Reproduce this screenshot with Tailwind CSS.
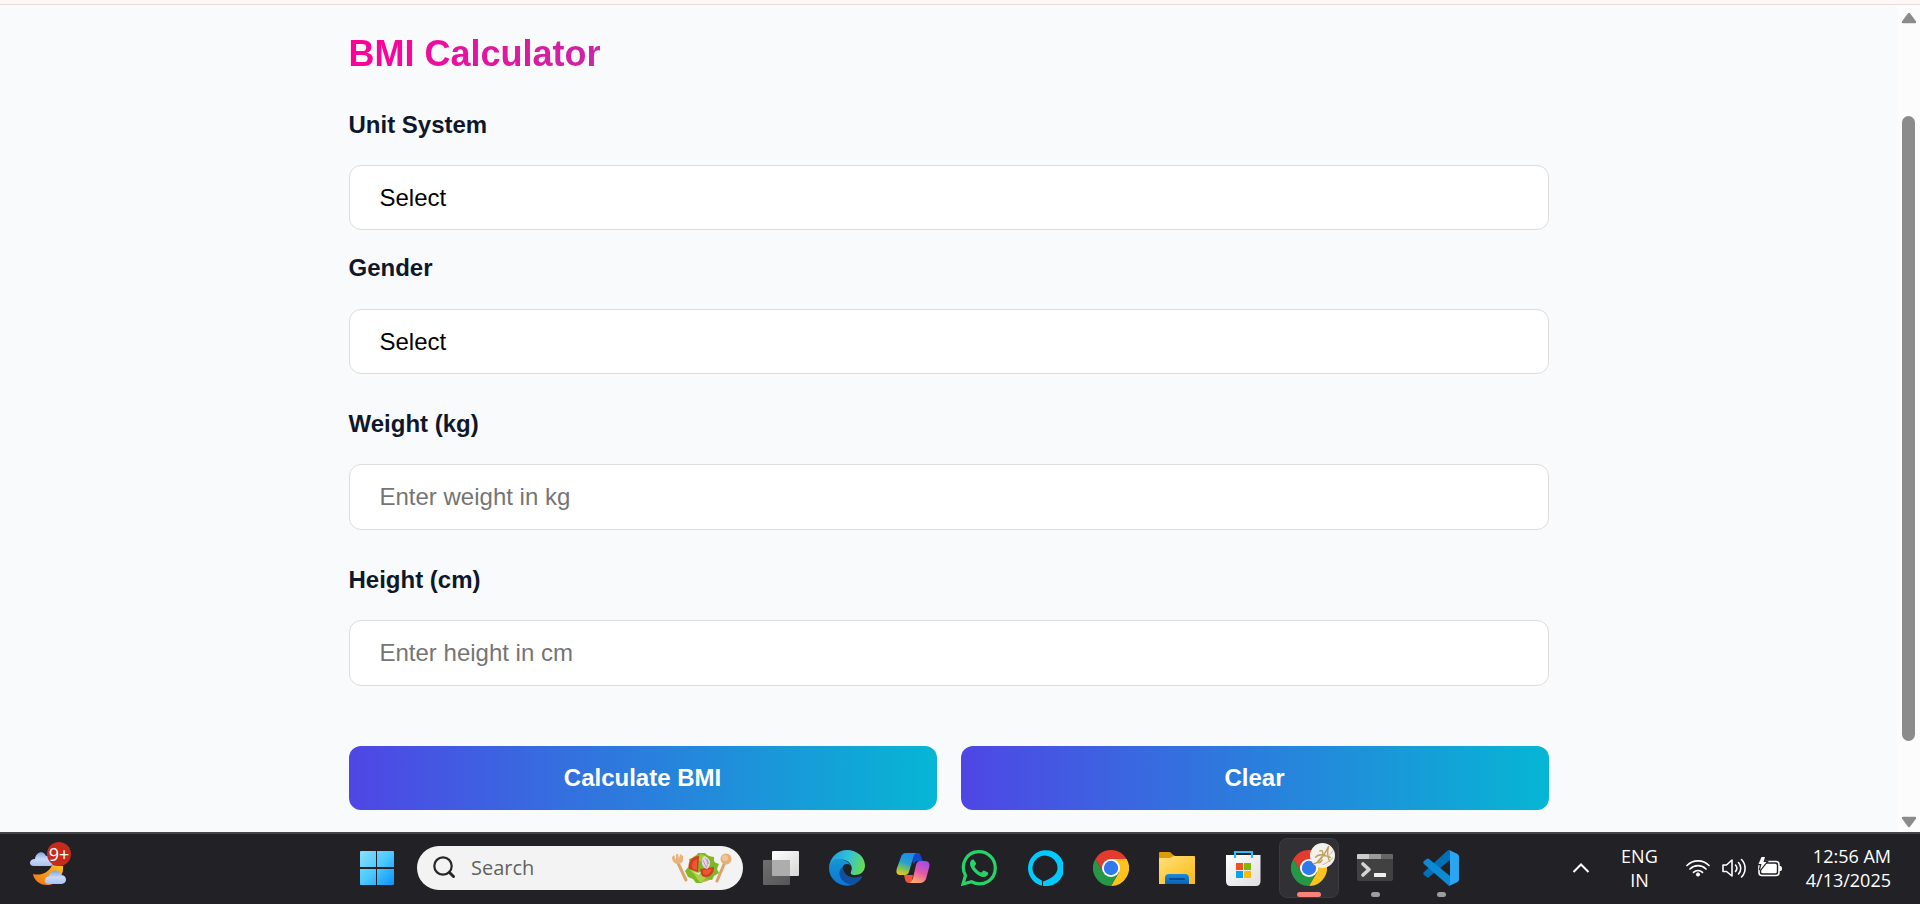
<!DOCTYPE html>
<html lang="en">
<head>
<meta charset="utf-8">
<title>BMI Calculator</title>
<script src="https://cdn.jsdelivr.net/npm/@tailwindcss/browser@4"></script>
</head>
<body class="flex h-screen flex-col overflow-hidden bg-[#f9fafc] font-['Liberation_Sans',Arial,sans-serif]">
<div class="h-[5px] shrink-0 border-b border-[#e6dcdb] bg-[#fff8f6]"></div>

<div class="flex min-h-0 flex-1">
  <main class="flex-1 overflow-hidden px-6 pt-[29px]">
    <form class="mx-auto flex max-w-[1200px] flex-col text-2xl text-black">
      <h1 class="mb-[37px] bg-linear-to-r/srgb from-[#ff0099] to-[#06b6d4] bg-clip-text text-4xl font-bold text-transparent">BMI Calculator</h1>
      <label for="unit" class="mb-[26px] text-2xl/7 font-bold text-[#0f172a]">Unit System</label>
      <select id="unit" class="mb-6 h-[65px] w-full appearance-none rounded-xl border border-[#dddddd] bg-white px-[30px]"><option>Select</option><option>Metric</option><option>Imperial</option></select>
      <label for="gender" class="mb-[27px] text-2xl/7 font-bold text-[#0f172a]">Gender</label>
      <select id="gender" class="mb-9 h-[65px] w-full appearance-none rounded-xl border border-[#dddddd] bg-white px-[30px]"><option>Select</option><option>Male</option><option>Female</option></select>
      <label for="weight" class="mb-[26px] text-2xl/7 font-bold text-[#0f172a]">Weight (kg)</label>
      <input id="weight" type="text" inputmode="decimal" placeholder="Enter weight in kg" class="mb-9 h-[66px] w-full rounded-xl border border-[#dddddd] bg-white px-[30px] placeholder:text-[#757575]">
      <label for="height" class="mb-[26px] text-2xl/7 font-bold text-[#0f172a]">Height (cm)</label>
      <input id="height" type="text" inputmode="decimal" placeholder="Enter height in cm" class="mb-[60px] h-[66px] w-full rounded-xl border border-[#dddddd] bg-white px-[30px] placeholder:text-[#757575]">
      <div class="grid grid-cols-2 gap-6">
        <button type="button" class="h-16 rounded-xl bg-linear-to-r/srgb from-[#4f46e5] to-[#06b6d4] font-bold text-white">Calculate BMI</button>
        <button type="button" class="h-16 rounded-xl bg-linear-to-r/srgb from-[#4f46e5] to-[#06b6d4] font-bold text-white">Clear</button>
      </div>
    </form>
  </main>
  <div class="flex w-[23px] flex-col items-center bg-[#fcfcfc] pt-[7px] pb-1 text-[#8b8b8b]" aria-hidden="true">
    <svg class="h-3 w-4" viewBox="0 0 16 12"><path d="M8 2 14 10H2Z" fill="currentColor" stroke="currentColor" stroke-width="2.4" stroke-linejoin="round"/></svg>
    <div class="mt-[92px] mb-[75px] w-[13px] flex-1 rounded-full bg-[#8b8b8b]"></div>
    <svg class="h-3 w-4" viewBox="0 0 16 12"><path d="M2 2H14L8 10Z" fill="currentColor" stroke="currentColor" stroke-width="2.4" stroke-linejoin="round"/></svg>
  </div>
</div>

<footer class="flex h-[72px] shrink-0 items-center border-t-2 border-[#454548] bg-[#222126] pr-[29px] pb-[2px] font-['Open_Sans','Noto_Sans',sans-serif] text-white">
  <div class="w-[344px] shrink-0 pl-7">
    <button type="button" aria-label="Weather, 9+ alerts" class="relative block h-[52px] w-[43px]">
      <svg class="h-12 w-[43px]" viewBox="0 0 43 48">
        <defs>
          <linearGradient id="cloud" x1="0" y1="0" x2="0" y2="1"><stop stop-color="#7fa3e4"/><stop offset=".5" stop-color="#c9dafa"/><stop offset="1" stop-color="#a9c1f2"/></linearGradient>
          <linearGradient id="moon" x1="1" y1="0" x2="0" y2="1"><stop stop-color="#fbc02d"/><stop offset="1" stop-color="#ee7212"/></linearGradient>
        </defs>
        <path d="M5 30C12 32 21 29 24 21L35 22C36 33 28 41 19 41 11 41 6 36 5 30Z" fill="url(#moon)"/>
        <path d="M6 22C0 22 1 15 7 15 8 7 16 6 18 12 23 10 25 14 25 17 26 20 24 22 21 22Z" fill="url(#cloud)"/>
        <path d="M21 40C15 40 16 33 21 32 23 25 31 25 33 31 39 31 40 39 34 40Z" fill="url(#cloud)"/>
      </svg>
      <span class="absolute top-0 right-0 flex size-6 items-center justify-center rounded-full bg-[#c42b1c] text-lg">9+</span>
    </button>
  </div>

  <nav class="flex items-center" aria-label="Taskbar">
    <button type="button" aria-label="Start" class="flex w-[66px] justify-center">
      <svg class="size-9" viewBox="0 0 36 36">
        <defs><linearGradient id="win" x1="0" y1="0" x2="1" y2="1"><stop stop-color="#88e2fd"/><stop offset=".5" stop-color="#4cc9fd"/><stop offset="1" stop-color="#0a93fc"/></linearGradient></defs>
        <path d="M2 1H17V17H1V2Q1 1 2 1ZM18 1H34Q35 1 35 2V17H18ZM1 19H17V35H2Q1 35 1 34ZM18 19H35V34Q35 35 34 35H18Z" fill="url(#win)"/>
      </svg>
    </button>
    <label class="mr-[5px] ml-[7px] flex h-11 w-[326px] items-center rounded-full bg-[#f3f3f3] pr-[10px] pl-4">
      <svg class="size-6 shrink-0" viewBox="0 0 24 24" fill="none" stroke="#272727" stroke-linecap="round"><circle cx="10" cy="10" r="8.7" stroke-width="2.2"/><path d="M16.5 16.500 20.500 20.500" stroke-width="3"/></svg>
      <input type="search" aria-label="Search" placeholder="Search" class="ml-[14px] w-0 min-w-0 flex-1 bg-transparent text-xl text-black placeholder:text-[#626262]">
      <svg class="h-8 w-[62px] shrink-0" viewBox="0 0 62 32">
        <path d="M7 11 15 28" stroke="#dba368" stroke-width="3" stroke-linecap="round"/>
        <path d="M1 5 3 3 5 8 5 2H7L8 7 9 2 12 4C13 9 11 12 7 12 3 12 1 9 1 5Z" fill="#e8b47c"/>
        <path d="M54 10 46 29" stroke="#dba368" stroke-width="3" stroke-linecap="round"/><circle cx="55" cy="7" r="5.500" fill="#e5af77"/><circle cx="54" cy="6" r="3" fill="#f0c797"/>
        <circle cx="31" cy="16" r="14" fill="#d9a060"/>
        <path d="M14 19 19 13 18 7 24 5 27 1 34 1 37 4 43 5 43 10 48 12 46 17 48 21 43 24 41 28 35 27 31 31 25 31 22 27 17 25Z" fill="#7eb827"/>
        <path d="M18 17 23 22 27 28 30 31 35 26 28 21Z" fill="#a9d44a"/><path d="M29 2 35 4 34 10 28 9Z" fill="#a0cf3c"/>
        <path d="M28 4C20 4 17 11 18 17L27 20Z" fill="#d83a20"/><path d="M26 7C21 9 20 14 22 17L26 18Z" fill="#e8593a"/>
        <path d="M29 17 43 15C43 23 37 27 31 24Z" fill="#d83a20"/><path d="M32 18 41 17C39 22 36 24 32 22Z" fill="#e8593a"/>
        <path d="M33 4C40 6 41 13 36 17 31 16 29 9 33 4Z" fill="#e8d5e8"/><path d="M34 6C37 9 37 13 35 16M32 8 35 15M36 7 38 12" stroke="#b58bb5" fill="none" stroke-width=".8"/>
        <path d="M21 19 26 21 30 20 28 23Z" fill="#f1e6df"/>
      </svg>
    </label>

    <button type="button" aria-label="Task view" class="flex w-[66px] justify-center">
      <svg class="size-9" viewBox="0 0 36 36">
        <defs><linearGradient id="tv" x2="1" y2="1"><stop stop-color="#fff"/><stop offset="1" stop-color="#d6d6d6"/></linearGradient><linearGradient id="tv2" x2="1" y2="1"><stop stop-color="#707070"/><stop offset="1" stop-color="#555"/></linearGradient></defs>
        <rect x="9" y="1" width="27" height="25" rx="1" fill="url(#tv)"/><rect y="10" width="27" height="25" rx="1" fill="url(#tv2)"/><path d="M9 10H27V26H10Q9 26 9 25Z" fill="#adadad"/>
      </svg>
    </button>
    <button type="button" aria-label="Microsoft Edge" class="flex w-[66px] justify-center">
      <svg class="size-9" viewBox="0 0 36 36">
        <defs>
          <linearGradient id="ed1" x1="0" y1=".4" x2="1" y2=".6"><stop stop-color="#1d9fe2"/><stop offset=".5" stop-color="#34c1d6"/><stop offset="1" stop-color="#67df4c"/></linearGradient>
          <linearGradient id="ed2" x1="0" y1="0" x2="0" y2="1"><stop stop-color="#1695d3"/><stop offset="1" stop-color="#0b78d8"/></linearGradient>
        </defs>
        <path d="M0 17C1 7 9 0 18 0 28 0 36 7 36 15.500 36 22 31 25 26 25 22 25 21 23.500 22 21.500 24 17 21 10 13 9.500 6 9 2 13 0 17Z" fill="url(#ed1)"/>
        <path d="M0 18C1 10 9 7 15 10 20 12 22 15 22 18 18 11 10 18 12 25 14 32 22 36 27 33.500 14 40 0 31 0 18Z" fill="url(#ed2)"/>
        <path d="M15 16C6 21 11 34 24 35 28 33 31 31 33 27 33 26 32 26 31 26.500 21 30 13 24 15 16Z" fill="#10519d"/>
        <path d="M18 14C23 14 23 18 22 21 21 23 21 24 23 25 17 24 13 20 14 16Q15 14 18 14Z" fill="#202126"/>
      </svg>
    </button>
    <button type="button" aria-label="Copilot" class="flex w-[66px] justify-center">
      <svg class="size-9" viewBox="0 0 36 36">
        <defs>
          <linearGradient id="cp1" x1=".5" y1="0" x2=".2" y2="1"><stop stop-color="#1a8fe6"/><stop offset=".4" stop-color="#249fd3"/><stop offset=".7" stop-color="#7bbf60"/><stop offset="1" stop-color="#f3c516"/></linearGradient>
          <linearGradient id="cp2" x1=".7" y1="0" x2=".3" y2="1"><stop stop-color="#a34be8"/><stop offset=".5" stop-color="#e35aa7"/><stop offset="1" stop-color="#ffae65"/></linearGradient>
        </defs>
        <path d="M18 3H23C26 3 26 8 28 11H22Q20 11 19 14L17 11Z" fill="#1747c4"/>
        <path d="M9 25H18L17 31Q16 33 14 33C10 33 10 29 9 25Z" fill="#f1513f"/>
        <path d="M11 3H21Q19 4 18 8L14 22Q13 25 10 25H5C1 25 1 21 2 18L6 7Q7 3 11 3Z" fill="url(#cp1)"/>
        <path d="M25 11H30C35 11 35 15 34 18L31 29Q29 33 25 33H14Q17 32 18 28L21 15Q22 11 25 11Z" fill="url(#cp2)"/>
      </svg>
    </button>
    <button type="button" aria-label="WhatsApp" class="flex w-[66px] justify-center">
      <svg class="size-9" viewBox="0 0 36 36"><path d="M2 34 4.500 25.500C-1.500 14 6 1.700 18 1.700 27 1.700 34.300 9 34.300 18 34.300 30 22 37.500 10.500 31.700Z" fill="none" stroke="#25d366" stroke-width="3.200"/><path d="M12.500 9.500C11 9 9 11 9 13.500 9 19 17 27 23 27 26 27 28 24 27 22.500L23 20.500C22 20 21 22.500 20 22.500 18 22 14.500 19 13.500 16.500 13.500 15.500 15.500 14.500 15 13Z" fill="#25d366"/></svg>
    </button>
    <button type="button" aria-label="Alexa" class="flex w-[66px] justify-center">
      <svg class="size-9" viewBox="0 0 36 36"><path d="M15 35.700V31.500C15 30.300 14.300 30 13.500 29.700A12.500 12.500 0 1 1 30.500 18C30.500 24.500 24 29 16 31.500V35.900A18 18 0 1 0 15 35.700Z" fill="#00caff"/></svg>
    </button>
    <button type="button" aria-label="Google Chrome" class="flex w-[66px] justify-center">
      <svg class="size-9" viewBox="0 0 36 36">
        <g id="chrome"><path d="M2.400 9A18 18 0 0 1 33.600 9H18L10.200 22.500Z" fill="#e33b2e"/><path d="M33.600 9A18 18 0 0 1 18 36L25.800 22.500 18 9Z" fill="#fcc31e"/><path d="M18 36A18 18 0 0 1 2.400 9L10.200 22.500 25.800 22.500Z" fill="#269746"/><circle cx="18" cy="18" r="9" fill="#fff"/><circle cx="18" cy="18" r="7.200" fill="#2f79ec"/></g>
      </svg>
    </button>
    <button type="button" aria-label="File Explorer" class="flex w-[66px] justify-center">
      <svg class="size-9" viewBox="0 0 36 36">
        <defs><linearGradient id="fo" x2="1" y2="1"><stop stop-color="#ffe07a"/><stop offset="1" stop-color="#fdb913"/></linearGradient><linearGradient id="fb" x2="0" y2="1"><stop stop-color="#188bdc"/><stop offset="1" stop-color="#0962b5"/></linearGradient></defs>
        <path d="M0 3Q0 2 1 2H10Q12 2 13 4L16 6V12H0Z" fill="#dd9c05"/><path d="M0 9Q0 8 1 8H11L15 6H35Q36 6 36 7V34H0Z" fill="url(#fo)"/><path d="M6 34V28Q6 24 10 24H26Q30 24 30 28V34Z" fill="url(#fb)"/><path d="M11 29H25" stroke="#084a91" stroke-width="2" stroke-linecap="round"/>
      </svg>
    </button>
    <button type="button" aria-label="Microsoft Store" class="flex w-[66px] justify-center">
      <svg class="size-9" viewBox="0 0 36 36">
        <defs><linearGradient id="st" x2="1" y2="1"><stop stop-color="#fff"/><stop offset="1" stop-color="#dedede"/></linearGradient></defs>
        <path d="M1 5H35.500V31Q35.500 36 31 36H5.500Q1 36 1 31Z" fill="url(#st)"/><path d="M10 8V2H27V8" fill="none" stroke="#2dbdf3" stroke-width="2.200"/><path d="M11 13H18V20H11Z" fill="#f25022"/><path d="M19 13H26V20H19Z" fill="#7fba00"/><path d="M11 21H18V28H11Z" fill="#00a4ef"/><path d="M19 21H26V28H19Z" fill="#ffb900"/>
      </svg>
    </button>
    <button type="button" aria-label="Google Chrome, active window" class="relative mx-[3px] flex size-[60px] items-center justify-center rounded-lg border border-[#3c3b40] bg-[#303035]">
      <svg class="size-9" viewBox="0 0 36 36"><use href="#chrome"/></svg>
      <svg class="absolute top-1 right-[3px] size-[25px]" viewBox="0 0 24 24"><circle cx="12" cy="12" r="12" fill="#f3f1ec"/><path d="M3 20C8 20 14 11 18 3 16 9 17 14 19 18M5 14C8 10 14 11 20 14M9 8C14 5 13 13 8 17 5 20 10 20 12 16" fill="none" stroke="#bfa05c" stroke-width="1.300"/><path d="M22 7C21 11 16 13 11 13M12 21C17 19 20 17 22 14" fill="none" stroke="#d2bd8c"/></svg>
      <span class="absolute inset-x-0 bottom-0 mx-auto h-[5px] w-6 rounded-full bg-[#fb8279]"></span>
    </button>
    <button type="button" aria-label="Terminal" class="relative flex h-[60px] w-[66px] items-center justify-center">
      <svg class="size-9" viewBox="0 0 36 36">
        <path d="M0 9H36V29Q36 31 34 31H2Q0 31 0 29Z" fill="#414141"/><path d="M0 9V5Q0 4 1 4H12V9Z" fill="#ccc"/><path d="M12 4H24V9H12Z" fill="#9b9b9b"/><path d="M24 4H35Q36 4 36 5V9H24Z" fill="#666"/><path d="M6 14 12 19.500 6 25" fill="none" stroke="#d6d6d6" stroke-width="3.600" stroke-linecap="round" stroke-linejoin="round"/><rect x="17" y="23" width="12" height="4" rx=".6" fill="#f0f0f0"/>
      </svg>
      <span class="absolute inset-x-0 bottom-[1px] mx-auto h-[5px] w-[9px] rounded-full bg-[#9d9d9f]"></span>
    </button>
    <button type="button" aria-label="Visual Studio Code" class="relative flex h-[60px] w-[66px] items-center justify-center">
      <svg class="size-9" viewBox="0 0 36 36">
        <path d="M1 22 24 1Q25.500 0 27 0V10L6 27Q5 28 3.700 27L1 25Q-.5 23.500 1 22Z" fill="#0070b7"/><path d="M1 11 3.700 9Q5 8 6 9L27 26V36Q26 36 25 35L1 14Q-.5 12.500 1 11Z" fill="#0d8ad4"/><path d="M26 0 34.500 4Q36 5 36 6.500V29.500Q36 31 34.500 32L26 36Q27 35.500 27 33V3Q27 .5 26 0Z" fill="#29a5f2"/>
      </svg>
      <span class="absolute inset-x-0 bottom-[1px] mx-auto h-[5px] w-[9px] rounded-full bg-[#9d9d9f]"></span>
    </button>
  </nav>

  <div class="ml-auto flex items-center">
    <button type="button" aria-label="Show hidden icons" class="mr-[31px]"><svg class="size-[18px]" viewBox="0 0 18 18" fill="none" stroke="white" stroke-width="2"><path d="M1.500 13 9 5.500 16.500 13"/></svg></button>
    <button type="button" class="mr-7 text-center text-lg/6">ENG<br>IN</button>
    <button type="button" aria-label="Network, volume and battery" class="mr-6 flex items-center gap-3">
      <svg class="size-6" viewBox="0 0 24 24" fill="none" stroke="white" stroke-width="1.700" stroke-linecap="round"><path d="M1 9.500A15.500 15.500 0 0 1 23 9.500M4 13A11.300 11.300 0 0 1 20 13M7.500 16.300A6.500 6.500 0 0 1 16.500 16.300"/><circle cx="12" cy="18.500" r="1.600" fill="white" stroke-width="1"/></svg>
      <svg class="size-6" viewBox="0 0 24 24" fill="none" stroke="white" stroke-width="1.600" stroke-linecap="round" stroke-linejoin="round"><path d="M1 9H4.500L10 4V20L4.500 15.500H1ZM13.500 9A5 5 0 0 1 13.500 15.500M16.500 6.500A8.500 8.500 0 0 1 16.500 18M19.500 3.500A12.500 12.500 0 0 1 19.500 21"/></svg>
      <svg class="size-6" viewBox="0 0 24 24"><rect x="1" y="5.500" width="20" height="14" rx="3" fill="none" stroke="white" stroke-width="1.600"/><rect x="3.200" y="7.700" width="15.600" height="9.600" rx="1.500" fill="white"/><path d="M21 10H22.500Q24 10 24 12.500T22.500 15H21Z" fill="white"/><path d="M3.500 1 .5 8H3.500L2 14 8.500 6H5.500L7 1Z" fill="white" stroke="#222126" stroke-width="2.400" paint-order="stroke"/></svg>
    </button>
    <button type="button" class="text-right text-lg/6">12:56 AM<br>4/13/2025</button>
  </div>
</footer>
</body>
</html>
